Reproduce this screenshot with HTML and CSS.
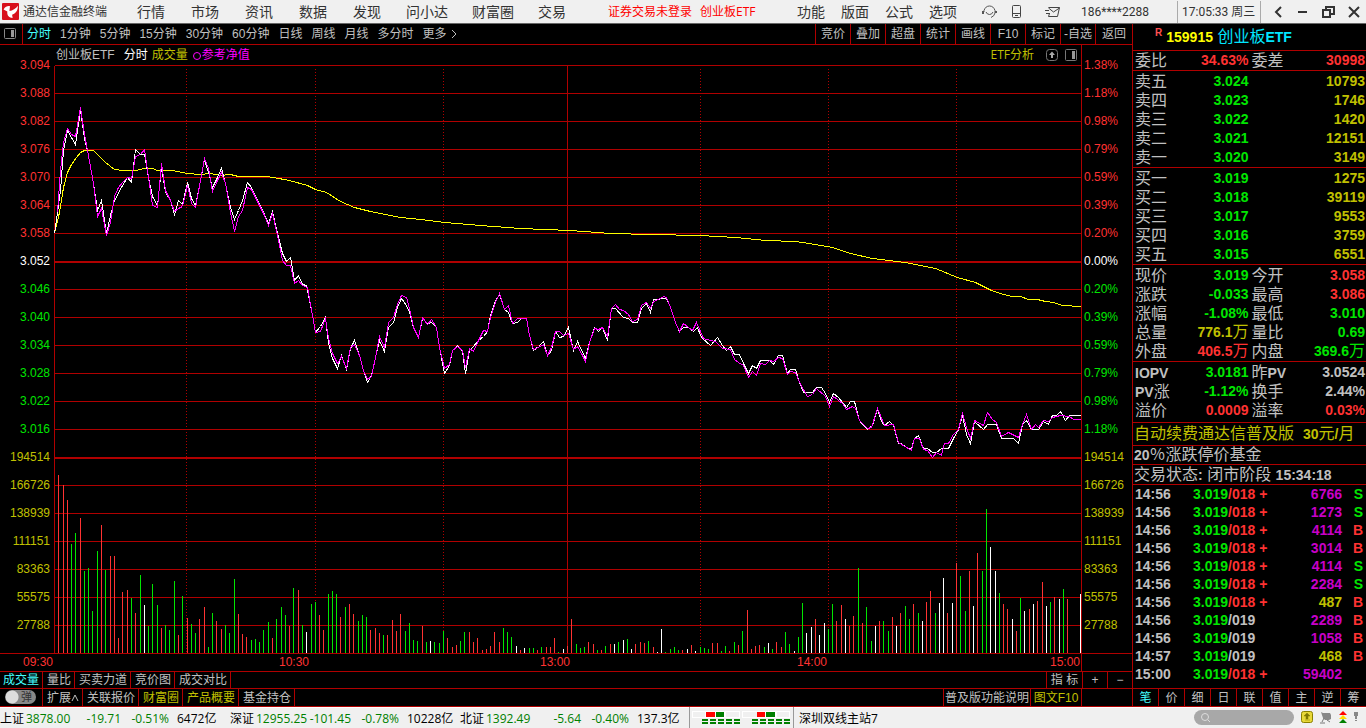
FILE: index.html
```html
<!DOCTYPE html>
<html lang="zh-CN">
<head>
<meta charset="utf-8">
<title>通达信金融终端</title>
<link rel="stylesheet" href="styles.css">
</head>
<body>
<div class="app">
  <header class="topbar">
    <svg class="logo" viewBox="0 0 16 16"><rect width="16" height="16" rx="1" fill="#d8101c"/><path d="M1.500 6C3 3.500 5.500 2.500 7.500 3L7 7.500C10 7 13 5 15 2.500 15 8 12 10 9.500 11L10 14C7 14 4.500 12 5 8z" fill="#fff"/></svg>
    <h1 class="brand">通达信金融终端</h1>
    <nav class="menu menu-main"><button>行情</button><button>市场</button><button>资讯</button><button>数据</button><button>发现</button></nav>
    <nav class="menu menu-extra"><button>问小达</button><button>财富圈</button><button>交易</button></nav>
    <div class="login"><a href="#">证券交易未登录</a><a href="#">创业板ETF</a></div>
    <nav class="menu menu-tools"><button>功能</button><button>版面</button><button>公式</button><button>选项</button></nav>
    <div class="top-icons">
      <button aria-label="客服"><svg width="15" height="14" viewBox="0 0 15 14" fill="none" stroke="#555"><path d="M2 7V5.500Q3.500 1 7.500 1T13 5.500V8q-.5 3-4 4.500M4 7q1 2.500 3.500 2.500T11 7"/><path d="M1 6v3M14 6v2" stroke-width="2"/></svg></button>
      <button aria-label="手机"><svg width="18" height="14" viewBox="0 0 18 14" fill="none" stroke="#444"><rect x=".5" y=".5" width="8" height="12" rx="1"/><path d="M1 8.500h7M3 10.500h3"/></svg></button>
      <button aria-label="消息"><svg width="16" height="12" viewBox="0 0 16 12" fill="none" stroke="#444"><path d="M3.500 1.500h11l-2 9h-9l1-3M3.500 2l5 4 6-4M0 4.500h4M1 7.500h4"/></svg></button>
    </div>
    <span class="account">186****2288</span>
    <time class="clock">17:05:33 周三</time>
    <div class="window-buttons">
      <button aria-label="后退"><svg width="12" height="12" viewBox="0 0 12 12"><path d="M9 1L4 6l5 5"/></svg></button>
      <button aria-label="最小化"><svg width="12" height="12" viewBox="0 0 12 12"><path d="M1 6h9"/></svg></button>
      <button aria-label="还原"><svg width="13" height="12" viewBox="0 0 13 12"><path d="M1 4h7v7H1zM4 4V1h8v7H8"/></svg></button>
      <button aria-label="关闭"><svg width="12" height="12" viewBox="0 0 12 12"><path d="M1 1l10 10M11 1L1 11"/></svg></button>
    </div>
  </header>

  <main class="workspace">
    <section class="chart-pane">
      <div class="toolbar">
        <button class="panel-toggle" aria-label="侧栏"><svg width="13" height="12" viewBox="0 0 13 12"><rect x=".5" y=".5" width="11" height="10" rx="1" fill="none" stroke="#888"/><path d="M7 2h3v7H7z" fill="#999"/></svg></button>
        <div class="periods"><button class="active">分时</button><button>1分钟</button><button>5分钟</button><button>15分钟</button><button>30分钟</button><button>60分钟</button><button>日线</button><button>周线</button><button>月线</button><button>多分时</button><button class="more">更多<svg width="6" height="10" viewBox="0 0 6 10"><path d="M1 1l4 4-4 4" fill="none" stroke="#c0c0c0"/></svg></button></div>
        <div class="actions"><button>竞价</button><button>叠加</button><button>超盘</button><button>统计</button><button>画线</button><button>F10</button><button>标记</button><button>-自选</button><button class="back">返回</button></div>
      </div>

      <div class="chart">
        <div class="chart-title">
          <span>创业板ETF</span><span class="white">分时</span><span class="yellow">成交量</span><span class="nav-line"><svg width="9" height="9" viewBox="0 0 9 9"><circle cx="4" cy="5" r="3.500" fill="none" stroke="#f0f"/></svg>参考净值</span>
          <a class="analysis" href="#">ETF分析</a>
          <button aria-label="展开"><svg width="12" height="12" viewBox="0 0 12 12"><rect x=".5" y=".5" width="11" height="11" rx="3" fill="none" stroke="#777"/><path d="M6 2.500l3 3.500H7v3H5V6H3z" fill="#aaa"/></svg></button>
          <button aria-label="分栏"><svg width="12" height="12" viewBox="0 0 12 12"><rect x=".5" y=".5" width="11" height="11" rx="1" fill="none" stroke="#777"/><path d="M7 2h3v8H7z" fill="#999"/></svg></button>
        </div>
        <div class="axis axis-left">
          <span class="up">3.094</span><span class="up">3.088</span><span class="up">3.082</span><span class="up">3.076</span><span class="up">3.070</span><span class="up">3.064</span><span class="up">3.058</span><span class="white">3.052</span><span class="down">3.046</span><span class="down">3.040</span><span class="down">3.034</span><span class="down">3.028</span><span class="down">3.022</span><span class="down">3.016</span><span>194514</span><span>166726</span><span>138939</span><span>111151</span><span>83363</span><span>55575</span><span>27788</span>
        </div>
        <svg class="plot" id="plot" viewBox="53.5 64.5 1027 588" preserveAspectRatio="none" role="img" aria-label="创业板ETF 分时走势"></svg>
        <div class="axis-right-frame">
          <div class="axis axis-right">
            <span class="up">1.38%</span><span class="up">1.18%</span><span class="up">0.98%</span><span class="up">0.79%</span><span class="up">0.59%</span><span class="up">0.39%</span><span class="up">0.20%</span><span class="white">0.00%</span><span class="down">0.20%</span><span class="down">0.39%</span><span class="down">0.59%</span><span class="down">0.79%</span><span class="down">0.98%</span><span class="down">1.18%</span><span>194514</span><span>166726</span><span>138939</span><span>111151</span><span>83363</span><span>55575</span><span>27788</span>
          </div>
        </div>
        <div class="times"><span>09:30</span><span>10:30</span><span>13:00</span><span>14:00</span><span>15:00</span><span class="times-end"></span></div>
      </div>

      <div class="tabs">
        <button class="active first">成交量</button><button>量比</button><button>买卖力道</button><button>竞价图</button><button>成交对比</button>
        <div class="tabs-right"><button class="indicator">指 标</button><button class="step">+</button><button class="step">−</button></div>
      </div>
      <div class="tabs tabs-lower">
        <label class="popup-switch"><input type="checkbox"><span class="pill">弹</span></label><button class="expand">扩展<svg width="8" height="9" viewBox="0 0 8 9"><path d="M1 8l3-6 3 6" fill="none" stroke="#c0c0c0"/></svg></button><button>关联报价</button><button class="gold">财富圈</button><button class="gold">产品概要</button><button>基金持仓</button>
        <div class="tabs-right"><button class="help">普及版功能说明</button><button class="gold f10">图文F10</button><span class="tabs-end"></span></div>
      </div>
    </section>

    <aside class="quote">
      <h2 class="security"><sup>R</sup><span class="code">159915</span> <span class="name">创业板<b>ETF</b></span></h2>
      <table class="pairs single"><tr><th>委比</th><td class="up">34.63%</td><th>委差</th><td class="up">30998</td></tr></table>
      <table class="pairs depth">
        <tr><th>卖五</th><td class="down">3.024</td><td colspan="2">10793</td></tr>
        <tr><th>卖四</th><td class="down">3.023</td><td colspan="2">1746</td></tr>
        <tr><th>卖三</th><td class="down">3.022</td><td colspan="2">1420</td></tr>
        <tr><th>卖二</th><td class="down">3.021</td><td colspan="2">12151</td></tr>
        <tr><th>卖一</th><td class="down">3.020</td><td colspan="2">3149</td></tr>
      </table>
      <table class="pairs depth">
        <tr><th>买一</th><td class="down">3.019</td><td colspan="2">1275</td></tr>
        <tr><th>买二</th><td class="down">3.018</td><td colspan="2">39119</td></tr>
        <tr><th>买三</th><td class="down">3.017</td><td colspan="2">9553</td></tr>
        <tr><th>买四</th><td class="down">3.016</td><td colspan="2">3759</td></tr>
        <tr><th>买五</th><td class="down">3.015</td><td colspan="2">6551</td></tr>
      </table>
      <table class="pairs">
        <tr><th>现价</th><td class="down">3.019</td><th>今开</th><td class="up">3.058</td></tr>
        <tr><th>涨跌</th><td class="down">-0.033</td><th>最高</th><td class="up">3.086</td></tr>
        <tr><th>涨幅</th><td class="down">-1.08%</td><th>最低</th><td class="down">3.010</td></tr>
        <tr><th>总量</th><td class="yellow">776.1<i>万</i></td><th>量比</th><td class="down">0.69</td></tr>
        <tr><th>外盘</th><td class="up">406.5<i>万</i></td><th>内盘</th><td class="down">369.6<i>万</i></td></tr>
      </table>
      <table class="pairs nav-table">
        <tr><th><b>IOPV</b></th><td class="down">3.0181</td><th>昨<b>PV</b></th><td>3.0524</td></tr>
        <tr><th><b>PV</b>涨</th><td class="down">-1.12%</td><th>换手</th><td>2.44%</td></tr>
        <tr><th>溢价</th><td class="up">0.0009</td><th>溢率</th><td class="up">0.03%</td></tr>
      </table>
      <p class="note promo"><a href="#">自动续费通达信普及版&nbsp; <b>30</b>元<b>/</b>月</a></p>
      <p class="note limit"><b>20</b>％涨跌停价基金</p>
      <p class="note state">交易状态<b>:</b> 闭市阶段 <b>15:34:18</b></p>
      <div class="trades-box">
      <table class="trades">
        <tr><td>14:56</td><td><span class="down">3.019</span><span class="up">/018 +</span></td><td class="big">6766</td><td class="down">S</td></tr>
        <tr><td>14:56</td><td><span class="down">3.019</span><span class="up">/018 +</span></td><td class="big">1273</td><td class="down">S</td></tr>
        <tr><td>14:56</td><td><span class="down">3.019</span><span class="up">/018 +</span></td><td class="big">4114</td><td class="up">B</td></tr>
        <tr><td>14:56</td><td><span class="down">3.019</span><span class="up">/018 +</span></td><td class="big">3014</td><td class="up">B</td></tr>
        <tr><td>14:56</td><td><span class="down">3.019</span><span class="up">/018 +</span></td><td class="big">4114</td><td class="down">S</td></tr>
        <tr><td>14:56</td><td><span class="down">3.019</span><span class="up">/018 +</span></td><td class="big">2284</td><td class="down">S</td></tr>
        <tr><td>14:56</td><td><span class="down">3.019</span><span class="up">/018 +</span></td><td class="yellow">487</td><td class="up">B</td></tr>
        <tr><td>14:56</td><td><span class="down">3.019</span>/019</td><td class="big">2289</td><td class="up">B</td></tr>
        <tr><td>14:56</td><td><span class="down">3.019</span>/019</td><td class="big">1058</td><td class="up">B</td></tr>
        <tr><td>14:57</td><td><span class="down">3.019</span>/019</td><td class="yellow">468</td><td class="up">B</td></tr>
        <tr><td>15:00</td><td><span class="down">3.019</span><span class="up">/018 +</span></td><td class="big">59402</td><td></td></tr>
      </table>
      </div>
      <div class="quote-tabs"><button class="active">笔</button><button>价</button><button>细</button><button>日</button><button>联</button><button>值</button><button>主</button><button>逆</button><button>筹</button></div>
    </aside>
  </main>

  <footer class="statusbar">
    <div class="index"><span>上证</span><span class="fall">3878.00</span><span class="fall num">-19.71</span><span class="fall num">-0.51%</span><span class="amount">6472亿</span></div>
    <div class="index"><span>深证</span><span class="fall">12955.25</span><span class="fall num">-101.45</span><span class="fall num">-0.78%</span><span class="amount">10228亿</span></div>
    <div class="index"><span>北证</span><span class="fall">1392.49</span><span class="fall num">-5.64</span><span class="fall num">-0.40%</span><span class="amount">137.3亿</span></div>
    <div class="signals">
      <svg width="48" height="14" viewBox="0 0 48 14"><path d="M0 0h48v7H0z" fill="#fff"/><path d="M1 1h12v5H1zM34 1h13v5H34z" fill="#f0f0f0"/><path d="M14 1h9v5h-9z" fill="red"/><path d="M24 1h8v5h-8z" fill="green"/><path d="M10 9h38M10 12h38" stroke="green" stroke-width="2" stroke-dasharray="6 2"/></svg>
      <svg width="48" height="14" viewBox="0 0 48 14"><path d="M0 0h48v7H0z" fill="#fff"/><path d="M1 1h14v5H1zM35 1h12v5H35z" fill="#f0f0f0"/><path d="M15 1h8v5h-8z" fill="red"/><path d="M24 1h9v5h-9z" fill="green"/><path d="M10 9h38M10 12h38" stroke="green" stroke-width="2" stroke-dasharray="6 2"/></svg>
    </div>
    <span class="server">深圳双线主站7</span>
    <div class="status-right">
      <label class="search"><svg width="11" height="11" viewBox="0 0 11 11" fill="none" stroke="#ddd"><circle cx="5" cy="5" r="3.500"/><path d="M8 8l2 2"/></svg><input type="text" aria-label="搜索"></label>
      <svg width="12" height="13" viewBox="0 0 12 13"><rect x=".5" y=".5" width="11" height="11" rx="2" fill="#e8d838" stroke="#8a8000"/><path d="M6 2l3 3H7v3H5V5H3zM4 9h5" fill="#807800" stroke="#807800" stroke-width=".5"/></svg>
      <svg width="12" height="13" viewBox="0 0 12 13"><path d="M1 1l2 1h7l1 2v4l-2 1H5L3 7z" fill="#888"/><path d="M4 7l-2 4M0 12h5M7 9l3 2" stroke="#777"/></svg>
      <svg width="8" height="13" viewBox="0 0 8 13"><path d="M4 0l4 4H0z" fill="red"/><path d="M4 4l4 4H0z" fill="#fd0"/><path d="M4 8l4 4H0z" fill="green"/></svg>
      <svg width="4" height="13" viewBox="0 0 4 13"><path d="M0 1h4v4H3v3H1V5H0zM1 9h2v1H1z" fill="#888"/></svg>
    </div>
  </footer>
</div>
<script src="chart.js"></script>
</body>
</html>
```

FILE: styles.css
```css
* { box-sizing: border-box; }

body {
  margin: 0;
  background: #000;
  color: #c0c0c0;
  font: 12px/16px "Liberation Sans", "Noto Sans CJK SC", sans-serif;
}

button {
  margin: 0;
  padding: 0;
  border: 0;
  background: none;
  color: inherit;
  font: inherit;
  white-space: nowrap;
}

a { color: inherit; text-decoration: none; }
svg { display: block; }
i { font-style: normal; line-height: 0; }

.up { color: #ff3232; }
.down { color: #00e600; }
.white { color: #fff; }
.yellow, .gold { color: #c0c000; }

.app {
  min-height: 100vh;
  display: grid;
  grid-template-rows: 24px minmax(0, 1fr) 22px;
}

/* Top bar */
.topbar {
  display: flex;
  align-items: center;
  border-bottom: 1px solid #666;
  background: #f0f0f0;
  color: #333;
  white-space: nowrap;
}
.logo { width: 17px; height: 17px; margin-left: 2px; }
.brand { margin: 0 0 0 4px; font-size: 12px; font-weight: 400; }
.menu { display: flex; font-size: 14px; }
.menu-main { gap: 26px; margin-left: 30px; }
.menu-extra { gap: 24px; margin-left: 25px; }
.menu-tools { gap: 16px; margin-left: auto; }
.login { display: flex; gap: 8px; margin-left: 42px; color: #f00; font-family: "Open Sans", "Noto Sans CJK SC", sans-serif; }
.top-icons { display: flex; align-items: center; gap: 15px; margin-left: 25px; }
.account { margin-left: 20px; width: 96px; font-family: Roboto, sans-serif; }
.clock {
  width: 84px;
  padding-left: 4px;
  border-left: 1px solid #aaa;
  border-right: 1px solid #aaa;
  font-family: Roboto, "Noto Sans CJK SC", sans-serif;
  line-height: 22px;
}
.window-buttons { display: flex; align-items: center; gap: 13px; padding: 0 6px 0 11px; }
.window-buttons svg { fill: none; stroke: #333; stroke-width: 2; }

/* Workspace */
.workspace { display: grid; grid-template-columns: minmax(0, 1fr) 234px; }
.chart-pane {
  display: grid;
  grid-template-rows: 21px minmax(0, 1fr) 17px 18px;
  min-width: 0;
}

.toolbar { display: flex; border-bottom: 1px solid #b00000; }
.panel-toggle { width: 23px; padding-left: 4px; border-right: 1px solid #b00000; }
.periods { display: flex; align-items: center; gap: 9px; padding-left: 4px; }
.more { display: flex; align-items: center; gap: 4px; }
.active { color: #4ff; }
.actions { display: flex; margin-left: auto; }
.actions button { width: 35px; border-left: 1px solid #b00000; }
.actions .back { width: 37px; }

.chart {
  display: grid;
  grid-template-columns: 54px minmax(0, 1fr) 51px;
  grid-template-rows: 20px minmax(0, 1fr) 18px;
}
.chart-title {
  grid-column: 2;
  display: flex;
  align-items: center;
  gap: 4px;
  padding: 0 4px 0 2px;
}
.chart-title .white { margin-left: 5px; }
.nav-line { display: flex; align-items: center; margin-left: 1px; color: #f0f; }
.analysis { margin-left: auto; margin-right: 8px; color: #c0c000; font-family: "Open Sans", "Noto Sans CJK SC", sans-serif; }
.chart-title button + button { margin-left: 3px; }
.axis { display: flex; flex-direction: column; color: #c0c000; }
.axis span { flex: 1; display: flex; align-items: center; }
.axis-left { grid-column: 1; grid-row: 2; margin: -14px 0 14px; padding-right: 4px; text-align: right; }
.axis-left span { justify-content: flex-end; }
.plot { grid-column: 2; grid-row: 2; width: 100%; height: 100%; }
.axis-right-frame { grid-column: 3; grid-row: 1 / 3; display: flex; padding: 6px 0 14px; border-left: 1px solid #b00000; }
.axis-right { flex: 1; padding-left: 2px; }
.times {
  grid-column: 1 / 4;
  display: grid;
  grid-template-columns: 54px 256fr 261fr 257fr 253fr 51px;
  border-top: 1px solid #b00000;
  color: #ff3232;
  text-align: right;
}
.times span { padding-right: 1px; }
.times-end { border-left: 1px solid #b00000; }

.grid-line { stroke: #b00000; }
.grid-strong { stroke-width: 2; }
.grid-dots { stroke-dasharray: 1 2; }
.plot path, .plot polyline { fill: none; vector-effect: non-scaling-stroke; shape-rendering: crispEdges; }
.bars-r { stroke: #ff3232; }
.bars-g { stroke: #00e600; }
.bars-w { stroke: #fff; }
.price { stroke: #fff; }
.average { stroke: #ff0; }
.net-value { stroke: #f0f; }

.tabs { display: flex; border-top: 1px solid #b00000; line-height: 16px; }
.tabs > button, .help { padding: 0 3px 0 4px; border-right: 1px solid #b00000; }
.tabs > .first { padding-left: 3px; }
.tabs > .expand { display: flex; align-items: center; }
.tabs-right { display: flex; margin-left: auto; }
.indicator { width: 36px; border-left: 1px solid #b00000; }
.step { width: 25px; border-left: 1px solid #b00000; }
.help { border-left: 1px solid #b00000; padding: 0 1px; }
.f10 { width: 50px; }
.tabs-end { width: 51px; border-left: 1px solid #b00000; }
.popup-switch { width: 43px; padding: 1px 0 0 5px; border-right: 1px solid #b00000; }
.popup-switch input { position: absolute; opacity: 0; }
.pill {
  display: flex;
  align-items: center;
  justify-content: flex-end;
  width: 31px;
  height: 14px;
  padding-right: 4px;
  border-radius: 7px;
  background: radial-gradient(circle at 7px 7px, #ddd 6px, #888 7px);
  color: #333;
  font-size: 11px;
}

/* Quote panel */
.quote { display: flex; flex-direction: column; border-left: 1px solid #b00000; }
.security { margin: 0; height: 26px; padding-left: 22px; font-size: 16px; line-height: 26px; font-weight: 400; white-space: nowrap; }
.security sup { font-size: 10px; line-height: 10px; font-weight: 700; color: #ff5050; margin-right: 4px; }
.security .code { font-size: 14px; font-weight: 700; color: #ff0; }
.security .name { color: #00e6ff; }
b { font-size: 14px; line-height: 0; }
table { border-collapse: collapse; table-layout: fixed; width: 100%; }
.pairs { border-top: 1px solid #b00000; border-collapse: separate; border-spacing: 0; padding-top: 1px; }
.pairs.single { padding: 0; }
.nav-table { padding: 1px 0 2px; }
.pairs tr { height: 19px; }
.pairs th, .pairs td { vertical-align: top; line-height: 19px; white-space: nowrap; }
.pairs th { width: 18%; padding: 0 0 0 2px; font-size: 16px; font-weight: 400; text-align: left; }
.pairs td { padding: 0 1px 0 0; font-size: 14px; font-weight: 700; text-align: right; }
.pairs td:nth-child(2) { width: 32%; }
.pairs i { font-size: 16px; font-weight: 400; }
.depth td:last-child { color: #c0c000; }
.note { margin: 0; padding-left: 1px; border-top: 1px solid #b00000; font-size: 16px; white-space: nowrap; }
.promo { color: #c0c000; line-height: 22px; }
.limit { line-height: 18px; }
.state { line-height: 19px; }
.trades-box { flex: 1; border-top: 1px solid #b00000; }
.trades td { height: 18px; padding: 0; font-size: 14px; line-height: 18px; font-weight: 700; text-align: right; white-space: nowrap; }
.trades td:nth-child(1) { width: 60px; padding-left: 2px; text-align: left; }
.trades td:nth-child(2) { text-align: left; }
.trades td:nth-child(3) { width: 60px; }
.trades td:nth-child(4) { width: 24px; padding-right: 3px; }
.trades .big { color: #c800c8; }
.quote-tabs { display: flex; height: 18px; border-top: 1px solid #b00000; }
.quote-tabs button { flex: 1; }
.quote-tabs button + button { border-left: 1px solid #b00000; }

/* Status bar */
.statusbar {
  display: flex;
  align-items: center;
  border-top: 1px solid #b00000;
  background: #f0f0f0;
  color: #000;
  font-family: "Open Sans", "Noto Sans CJK SC", sans-serif;
  white-space: nowrap;
  box-shadow: inset 0 1px #fff;
}
.index { display: grid; grid-template-columns: 26px 50px 45px 48px 61px; padding-top: 2px; }
.fall { color: #008000; }
.num { text-align: right; }
.amount { padding-left: 8px; }
.signals { display: flex; gap: 2px; margin-left: -1px; padding: 4px 3px 3px 2px; border-left: 1px solid #999; border-right: 1px solid #999; }
.server { margin-left: 5px; padding-top: 2px; }
.status-right { display: flex; align-items: center; gap: 7px; margin-left: auto; padding-right: 8px; }
.search { display: flex; align-items: center; width: 100px; height: 15px; padding: 0 6px; border-radius: 8px; background: #a8a8a8; }
.search input { flex: 1; min-width: 0; height: 13px; padding: 0; border: 0; outline: 0; background: none; }
```

FILE: chart.js
```js
const plot = document.getElementById('plot');
const STEP = 4.275;
const LEFT = 54;
const BASE = 653;

// One entry per minute: colour letter and the y of the bar's top.
const volume = `r474 r484 r499 g543 g532 r517 g570 g567 g610 g550 r524 g569 r555 r555 r637 r591 r589 g597 r612 g574
w604 g625 g583 g604 r627 g624 g629 g580 r634 g595 r617 g623 g632 r618 r606 g646 g612 r620 r628 g624
g632 g578 r613 r633 r636 g639 g638 g641 g629 g621 r637 g618 g606 g614 r625 g587 r589 g624 w631 g603
g601 r614 r629 g593 g590 g593 r616 g606 r603 r613 g620 g614 g616 r629 r627 r632 g634 r634 r619 r630
r613 g630 g622 g639 g640 r625 g641 w640 g641 g642 g630 r637 r646 r644 g640 g631 r631 r641 r637 r649
r648 r645 r631 r641 g627 g631 g636 w645 r649 w647 g647 g647 r649 g646 r646 r646 r637 g651 w648 r645
r618 g643 g647 g646 r641 r643 g649 r649 g645 r643 w643 g641 w639 g638 w648 r643 r641 r642 g640 r646
w651 w628 g651 g648 g646 g649 r649 w648 r644 w650 g646 g647 g648 r642 r642 g650 g645 r650 g641 r644
g630 r609 r648 r645 r644 g646 w642 g648 r641 r646 g631 g643 w650 g636 g602 w632 w626 r618 w634 w622
g628 g603 r620 r604 w618 r625 r615 g567 r622 g606 g640 w625 r620 g620 g630 r616 w625 r612 g605 g618
r603 g612 w620 r601 r590 g612 w602 w577 r612 w602 r562 g575 g610 r570 w605 r552 g570 g508 w546 w570
g592 r603 r608 w618 r630 g597 w610 r608 w603 r600 r581 w605 g601 r596 w598 g588 r598 w652 w652 w593`.trim().split(/\s+/);

const net = '57,212 60,170 63,142 67,128 71,134 75,136 80,107 84,134 87,150 93,183 97,216 101,208 106,235 110,222 114,196 118,187 122,182 127,177 131,178 135,156 140,154 144,149 148,177 152,205 157,207 161,163 165,190 170,200 174,211 178,208 182,206 187,185 191,203 195,207 200,180 204,158 208,168 212,191 217,180 221,172 225,183 230,212 234,231 238,216 242,210 247,187 251,189 255,197 264,215 268,225 272,213 277,235 282,260 286,265 290,265 294,283 298,280 302,285 307,287 312,315 315,332 320,331 325,318 328,338 332,353 337,363 341,356 346,368 350,347 354,344 359,355 363,370 367,379 371,376 375,357 379,336 384,347 388,322 393,317 397,304 401,295 406,297 409,308 413,327 418,337 422,317 427,324 431,319 436,327 439,347 444,368 449,364 452,350 457,346 462,350 465,367 469,348 473,351 478,340 483,330 487,331 490,317 495,302 499,293 504,309 508,305 512,323 517,318 526,318 529,335 533,349 538,347 543,344 547,355 551,347 555,331 559,331 563,335 568,333 573,349 577,346 581,353 585,361 589,342 594,328 598,329 602,327 607,336 611,308 615,304 619,309 623,310 628,314 632,321 637,319 641,305 646,302 650,308 653,301 658,299 663,296 666,297 670,307 675,322 679,331 683,323 688,327 692,330 696,322 703,338 710,340 715,341 722,348 730,349 734,359 738,362 743,365 748,377 752,371 756,375 760,363 765,364 769,360 773,361 778,357 782,358 787,374 790,371 795,372 799,382 807,396 812,394 816,388 825,396 829,406 833,396 842,403 846,409 852,406 855,408 859,420 867,428 871,427 877,408 884,425 893,424 898,442 911,450 914,438 919,438 923,449 927,450 932,457 936,452 941,455 944,443 948,443 953,434 958,429 962,413 966,427 970,438 974,420 983,425 987,412 992,419 996,422 1001,436 1008,432 1018,437 1022,424 1026,414 1031,429 1035,424 1038,427 1043,420 1048,421 1052,417 1060,415 1069,416 1073,419 1081,419';

const price = '54,233 57,212 60,190 63,150 67,130 71,137 75,144 80,110 84,138 87,150 93,183 97,210 101,200 106,233 110,215 114,200 122,185 127,177 131,182 135,149 140,154 144,154 148,177 152,196 157,205 161,167 165,192 170,200 174,214 178,200 182,204 187,182 191,198 195,205 200,180 204,159 208,172 212,187 217,177 221,168 225,183 230,207 234,219 238,210 242,200 247,182 251,187 255,196 264,214 268,223 272,211 277,233 282,253 286,261 290,257 294,280 298,275 302,284 306,285 312,315 315,332 320,326 325,317 328,343 332,358 337,368 341,355 346,369 350,348 354,340 359,355 363,370 367,382 371,375 375,357 379,340 384,351 388,327 393,322 397,307 401,298 406,305 409,312 413,327 418,337 422,318 427,323 431,322 436,327 439,347 444,373 449,365 452,350 457,345 462,351 465,373 469,350 473,346 478,340 483,336 487,331 490,315 495,300 499,294 504,309 508,312 512,323 517,322 521,318 526,318 529,335 533,350 538,346 543,341 547,355 551,350 555,331 559,337 563,336 568,327 573,350 577,341 585,358 589,342 594,327 598,331 602,327 607,340 611,308 615,308 623,317 628,318 632,322 637,322 641,308 646,303 650,312 653,299 666,298 670,307 675,322 679,331 683,327 688,327 693,331 697,327 700,335 702,338 710,345 717,337 722,345 726,350 730,346 734,354 739,354 743,363 748,373 752,365 756,368 760,360 769,360 773,364 778,355 782,355 787,373 790,369 795,369 799,382 803,392 812,392 816,387 821,387 825,393 829,402 833,393 838,397 846,407 850,401 854,401 859,420 863,425 867,429 872,425 877,409 881,421 884,425 889,421 893,425 898,443 901,443 907,448 911,448 914,438 918,435 923,448 927,448 932,452 936,452 941,448 948,448 953,438 958,429 962,415 966,434 970,443 974,421 983,429 987,424 996,424 1001,438 1013,438 1018,443 1022,424 1026,420 1031,429 1038,429 1043,421 1048,424 1052,415 1056,415 1060,411 1065,420 1069,415 1081,415';

const average = '54,233 59,212 63,187 67,172 71,164 76,157 80,152 84,150 93,150 98,155 105,162 114,169 122,170 135,170 144,168 152,168 157,170 172,170 187,173 200,174 210,173 220,175 230,174 238,176 266,176 273,177 289,180 307,185 315,189 326,192 340,201 354,207 370,211 385,214 400,217 420,219 445,222 480,225 520,228 570,230 610,233 650,234 700,235 735,237 765,240 795,241 815,244 832,247 850,253 872,258 905,262 935,268 957,277 975,282 991,290 1003,294 1012,296 1020,296 1028,299 1037,299 1045,301 1053,302 1062,305 1081,306';

function add(tag, attrs) {
  const el = document.createElementNS('http://www.w3.org/2000/svg', tag);
  for (const key in attrs) el.setAttribute(key, attrs[key]);
  plot.appendChild(el);
}

for (let y = 65; y < BASE; y += 28) {
  const strong = y === 261 || y === 457;
  add('path', { class: 'grid-line' + (strong ? ' grid-strong' : ''), d: `M54 ${strong ? y + 0.5 : y}H1081` });
}
add('path', { class: 'grid-line', d: 'M54 65V653M567 65V653' });
add('path', { class: 'grid-line grid-dots', d: 'M186 68V653M315 68V653M443 68V653M700 68V653M828 68V653M956 68V653' });

for (const colour of ['r', 'g', 'w']) {
  let d = '';
  volume.forEach((bar, i) => {
    if (bar[0] === colour) d += `M${Math.round(LEFT + STEP * (i + 1))} ${BASE}V${bar.slice(1)}`;
  });
  add('path', { class: 'bars-' + colour, d });
}

add('polyline', { class: 'average', points: average });
add('polyline', { class: 'price', points: price });
add('polyline', { class: 'net-value', points: net });
```
